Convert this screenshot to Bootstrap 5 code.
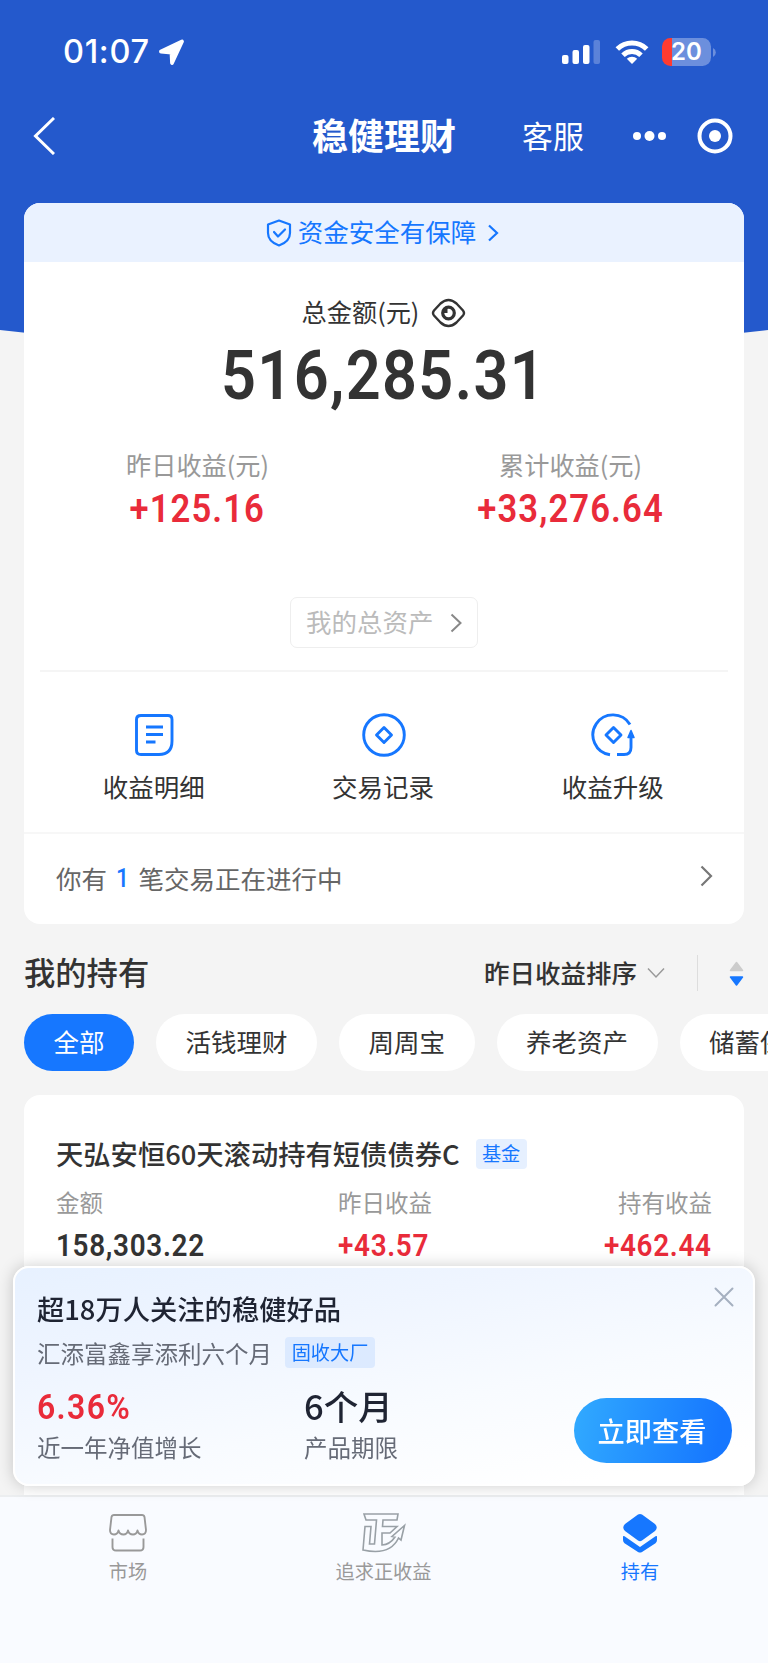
<!DOCTYPE html>
<html lang="zh-CN">
<head>
<meta charset="utf-8">
<meta name="viewport" content="width=device-width, initial-scale=1">
<title>稳健理财</title>
<link href="https://cdn.jsdelivr.net/npm/bootstrap@5.3.0/dist/css/bootstrap.min.css" rel="stylesheet">
<style>
  :root { --brand: #1677ff; --rise: #e92b3a; --ink: #333; }
  html, body { height: 1663px; overflow: hidden; }
  body { background: #f4f4f4; color: var(--ink); font-family: "Noto Sans CJK SC", sans-serif; font-size: 25.5px; line-height: 36px; }
  svg { display: block; flex: none; }
  .num { font-family: Roboto, "Noto Sans CJK SC", sans-serif; font-weight: 600; }
  .num > span { display: inline-block; transform: scaleX(.9); transform-origin: left; }
  .num.mid > span { transform-origin: center; }
  .num.end > span { transform-origin: right; }
  .rise { color: var(--rise); }
  .brand { color: var(--brand); }
  .muted { color: #999; }
  .nowrap { white-space: nowrap; }
  .lift { padding-bottom: 3px; }

  .hero { height: 372px; background: #2459cc; color: #fff; clip-path: polygon(0 0, 100% 0, 100% 330px, 50% 100%, 0 330px); }
  .status { height: 102px; padding: 2px 57px 0 63px; }
  .clock { font: 500 32.5px/40px Inter, sans-serif; letter-spacing: .7px; }
  .batt { width: 49px; height: 28px; border-radius: 8.5px; background: linear-gradient(90deg, #ff3b30 10px, #6c8fdd 10px); font: 600 24px/28px Inter, sans-serif; text-align: center; }
  .navrow { height: 68px; padding: 0 35px 0 32px; }
  .page-title { font-size: 36px; font-weight: 700; margin-left: 257px; width: 144px; }
  .service { font-size: 31px; margin-left: 66px; width: 62px; }

  .sheet { margin: 0 24px; border-radius: 16px; background: #fff; overflow: hidden; }
  .summary { margin-top: -169px; height: 721px; position: relative; }
  .safe { height: 59px; background: #eaf2ff; padding-right: 3px; }
  .total { font-size: 68px; line-height: 70px; letter-spacing: 1.5px; color: #333; }
  .gain { font-size: 38.5px; line-height: 44px; letter-spacing: 1.2px; }
  .assets { width: 188px; height: 51px; border: 1.5px solid #eee; border-radius: 7px; color: #bbb; }
  .actions { margin: 0 16px; height: 162px; border-top: 2px solid #f5f5f5; }
  .pending { height: 90px; padding: 0 31px 0 32px; border-top: 2px solid #f7f7f7; color: #666; }

  .holdhead { height: 60px; padding: 0 24px; margin-top: 19px; }
  .holdhead h2 { font-size: 31.3px; font-weight: 500; line-height: 40px; margin: 0; }
  .vr1 { width: 1px; height: 36px; background: #ddd; }
  .chips { gap: 22px; padding: 11px 0 0 24px; overflow: hidden; }
  .chip { height: 57px; padding: 0 29.5px 4px; border-radius: 29px; background: #fff; flex: none; display: flex; align-items: center; }
  .chip.on { background: var(--brand); color: #fff; }
  .fund { margin-top: 23.5px; height: 500px; padding: 38px 32px 0; }
  .fund-title { font-size: 27.3px; font-weight: 500; line-height: 40px; }
  .tagx { font-size: 19.2px; border-radius: 4px; background: #e6f0ff; color: var(--brand); display: flex; align-items: center; justify-content: center; padding-bottom: 1px; }
  .lab { font-size: 23.5px; line-height: 34px; }
  .val { font-size: 31px; line-height: 40px; letter-spacing: .75px; }

  .promo { margin: 0 13px 9px; height: 220px; border: 2px solid #fff; border-radius: 16px; padding: 20px 21px 0 22px; color: #1f2433;
    background: linear-gradient(168deg, #e7f1ff 0%, #eff5ff 30%, #f8fbff 60%, #fff 90%); box-shadow: 0 0 16px rgba(0,0,0,.2); position: relative; }
  .promo-title { font-size: 27.3px; font-weight: 500; line-height: 40px; }
  .promo .lab { color: #666b77; }
  .closer { position: absolute; right: 19px; top: 19px; }
  .cta { width: 158px; height: 65px; border-radius: 33px; background: linear-gradient(100deg, #31aaff, #1677ff 90%); color: #fff; font-size: 27.2px; font-weight: 500; margin-top: 17px; border: 0; padding: 0 2px 1px 0; }
  .tabs { height: 168px; background: #f9fbff; border-top: 2px solid #eceef0; padding-top: 16px; }
  .tabs .tab { width: 256px; font-size: 19.2px; line-height: 28px; color: #999; }
</style>
</head>
<body>
<header class="hero">
  <div class="status d-flex align-items-center">
    <span class="clock">01:07</span>
    <svg class="ms-2" width="28" height="27" viewBox="0 0 28 27"><path d="M3 12.500 24 2.500 14 24 13.500 13.500Z" fill="#fff" stroke="#fff" stroke-width="3.800" stroke-linejoin="round"/></svg>
    <svg class="ms-auto" width="39" height="25" viewBox="0 0 39 25" fill="#fff"><rect y="15" width="6.500" height="9" rx="2"/><rect x="10.500" y="10" width="6.500" height="14" rx="2"/><rect x="21" y="5" width="6.500" height="19" rx="2"/><rect x="31.500" width="6.500" height="24" rx="2" opacity=".25"/></svg>
    <svg style="margin-left:14px" width="34" height="26" viewBox="0 0 34 26" fill="none" stroke="#fff" stroke-width="5"><path d="M2.300 10a21 21 0 0 1 29.400 0"/><path d="M8 16.200a13 13 0 0 1 18 0"/><path d="M11.800 19.800a7.500 7.500 0 0 1 10.400 0L17 25Z" fill="#fff" stroke="none"/></svg>
    <div class="batt" style="margin-left:13px">20</div>
    <svg style="margin-left:2px; margin-right:-6px" width="4" height="9" viewBox="0 0 4 9"><path d="M0 0a5 5 0 0 1 0 9Z" fill="#6c8fdd"/></svg>
  </div>
  <nav class="navrow d-flex align-items-center nowrap">
    <svg width="23" height="38" viewBox="0 0 23 38" fill="none" stroke="#fff" stroke-width="3"><path d="M22 1 3.500 19 22 37"/></svg>
    <h1 class="page-title mb-0 lift">稳健理财</h1>
    <span class="service lift">客服</span>
    <svg class="ms-auto" width="34" height="12" viewBox="0 0 34 12" fill="#fff"><circle cx="4" cy="6" r="4"/><circle cx="16.500" cy="6" r="5"/><circle cx="29" cy="6" r="4"/></svg>
    <svg style="margin-left:30px" width="36" height="36" viewBox="0 0 36 36"><circle cx="18" cy="18" r="15.500" fill="none" stroke="#fff" stroke-width="4"/><circle cx="18" cy="18" r="6" fill="#fff"/></svg>
  </nav>
</header>

<main>
  <section class="sheet summary">
    <div class="safe brand d-flex align-items-center justify-content-center">
      <svg width="26" height="28" viewBox="0 0 26 28" fill="none" stroke="currentColor" stroke-width="2.200" stroke-linejoin="round"><path d="M13 1.500 24 5.500V14c0 6-4 10-11 12.500C6 24 2 20 2 14V5.500Z"/><path d="m8 13 4 4.500L19 10.500" stroke-linecap="round"/></svg>
      <span class="lift" style="margin-left:6px">资金安全有保障</span>
      <svg style="margin-left:11px" width="12" height="18" viewBox="0 0 12 18" fill="none" stroke="currentColor" stroke-width="2.200"><path d="m2 1.500 8 7.500-8 7.500"/></svg>
    </div>
    <div class="d-flex align-items-center justify-content-center" style="margin-top:31px">
      <span style="font-size:25.200px; padding-bottom:4px">总金额(元)</span>
      <svg style="margin-left:12px" width="35" height="30" viewBox="0 0 35 30" fill="none" stroke="#333" stroke-width="2.400"><path d="M3 12.500 9.500 5.500Q17.500-1.500 25.500 5.500L32 12.500Q34 15 32 17.500L25.500 24.500Q17.500 31.500 9.500 24.500L3 17.500Q1 15 3 12.500Z"/><circle cx="17.500" cy="15" r="5.800" stroke-width="3.200"/><path d="M16.500 10v5H12.500V10Z" fill="#333" stroke="none"/></svg>
    </div>
    <div class="total num mid text-center" style="margin-top:8px"><span>516,285.31</span></div>
    <div class="row g-0 text-center" style="margin-top:35px">
      <div class="col" style="flex:0 0 347px"><div class="muted" style="font-size:25.200px">昨日收益(元)</div><div class="gain num mid rise" style="margin-top:5px"><span>+125.16</span></div></div>
      <div class="col" style="padding-left:26px"><div class="muted" style="font-size:25.200px">累计收益(元)</div><div class="gain num mid rise" style="margin-top:5px"><span>+33,276.64</span></div></div>
    </div>
    <div class="assets d-flex align-items-center mx-auto" style="margin-top:66px; padding-left:15px">
      <span class="lift">我的总资产</span>
      <svg style="margin-left:16px" width="13" height="20" viewBox="0 0 13 20" fill="none" stroke="#888" stroke-width="2"><path d="m1.500 1.500 9 8.500-9 8.500"/></svg>
    </div>
    <div class="actions d-flex text-center" style="margin-top:22px; padding-top:40px">
      <div class="col-4 d-flex flex-column align-items-center">
        <svg width="46" height="46" viewBox="0 0 46 46" fill="none" stroke="#1677ff" stroke-width="2.900"><path d="M9 3.500H36Q40 3.500 40 7.500V29Q40 42.500 27 42.500H9Q4.500 42.500 4.500 38.500V7.500Q4.500 3.500 9 3.500Z"/><path d="M14 15h17M14 22.500h17M14 30H23.500"/></svg>
        <span style="margin:10px 2px 0 0">收益明细</span>
      </div>
      <div class="col-4 d-flex flex-column align-items-center">
        <svg width="46" height="46" viewBox="0 0 46 46" fill="none" stroke="#1677ff" stroke-width="2.900" stroke-linejoin="round"><circle cx="23" cy="23" r="20.300"/><path d="M23 15.500 30.500 23 23 30.500 15.500 23Z"/></svg>
        <span style="margin:10px 2px 0 0">交易记录</span>
      </div>
      <div class="col-4 d-flex flex-column align-items-center">
        <svg width="46" height="46" viewBox="0 0 46 46" fill="none" stroke="#1677ff" stroke-width="2.900" stroke-linejoin="round"><path d="M20 42.700A20 20 0 1 1 40 12.500"/><path d="M23.500 15.500 31 23 23.500 30.500 16 23Z"/><path d="M27 42.500h7q7 0 7-7V24"/><path d="M41 18.500 44 25.500h-6Z" fill="#1677ff" stroke-width="1.500"/></svg>
        <span style="margin:10px 1px 0 0">收益升级</span>
      </div>
    </div>
    <div class="pending d-flex align-items-center">
      <span>你有</span><span class="brand num" style="margin:0 8px 0 9px; font-weight:500"><span>1</span></span><span>笔交易正在进行中</span>
      <svg class="ms-auto mb-1" width="13" height="22" viewBox="0 0 13 22" fill="none" stroke="#777" stroke-width="2.200"><path d="m1.500 1.500 9.500 9.500-9.500 9.500"/></svg>
    </div>
  </section>

  <div class="holdhead d-flex align-items-center nowrap">
    <h2 class="lift">我的持有</h2>
    <span class="ms-auto lift" style="font-weight:500">昨日收益排序</span>
    <svg style="margin-left:10px" width="18" height="12" viewBox="0 0 18 12" fill="none" stroke="#999" stroke-width="1.500"><path d="m1 1.500 8 8.500 8-8.500"/></svg>
    <div class="vr1" style="margin:0 31px 0 32px"></div>
    <svg style="margin-top:2px" width="15" height="26" viewBox="0 0 15 26" stroke-width="1.500" stroke-linejoin="round"><path d="M7.500 1.500 13.500 9.500h-12Z" fill="#ccc" stroke="#ccc"/><path d="M7.500 24 13.500 16h-12Z" fill="#1677ff" stroke="#1677ff"/></svg>
  </div>

  <div class="chips d-flex nowrap">
    <span class="chip on">全部</span>
    <span class="chip">活钱理财</span>
    <span class="chip">周周宝</span>
    <span class="chip">养老资产</span>
    <span class="chip">储蓄保险</span>
  </div>

  <section class="sheet fund">
    <div class="d-flex align-items-center">
      <span class="fund-title">天弘安恒60天滚动持有短债债券C</span>
      <span class="tagx" style="width:51px; height:30px; margin:2px 0 0 16px">基金</span>
    </div>
    <div class="d-flex" style="margin-top:12px">
      <div style="width:282px"><div class="lab muted">金额</div><div class="val num" style="margin-top:7px"><span>158,303.22</span></div></div>
      <div><div class="lab muted">昨日收益</div><div class="val num rise" style="margin-top:7px"><span>+43.57</span></div></div>
      <div class="ms-auto text-end"><div class="lab muted">持有收益</div><div class="val num end rise" style="margin-top:7px"><span>+462.44</span></div></div>
    </div>
  </section>
</main>

<footer class="fixed-bottom nowrap">
  <aside class="promo">
    <svg class="closer" width="20" height="20" viewBox="0 0 20 20" stroke="#a5b0c0" stroke-width="2" stroke-linecap="round"><path d="M1.500 1.500 18.500 18.500M18.500 1.500 1.500 18.500"/></svg>
    <div class="promo-title">超18万人关注的稳健好品</div>
    <div class="d-flex align-items-center" style="margin-top:8px">
      <span class="lab">汇添富鑫享添利六个月</span>
      <span class="tagx" style="width:90px; height:31px; margin:0 0 1px 13px; background:#dceaff">固收大厂</span>
    </div>
    <div class="d-flex" style="margin-top:12px">
      <div style="width:267px"><div class="num rise" style="font-size:35.500px; line-height:46px; padding-top:2px; letter-spacing:1.500px"><span>6.36%</span></div><div class="lab" style="margin-top:0">近一年净值增长</div></div>
      <div><div style="font-size:34.500px; font-weight:500; line-height:46px">6个月</div><div class="lab" style="margin-top:2px">产品期限</div></div>
      <button class="cta ms-auto" style="margin-top:16px">立即查看</button>
    </div>
  </aside>
  <nav class="tabs d-flex text-center">
    <div class="tab d-flex flex-column align-items-center">
      <svg width="40" height="40" viewBox="0 0 40 40" fill="none" stroke="#999" stroke-width="1.900" stroke-linejoin="round"><path d="M6 2H34Q36 2 36.500 4L38 17Q38 21.500 34 21.500 30.500 21.500 29.500 17.500 28.500 21.500 25 21.500 21 21.500 20 17.500 19 21.500 15.500 21.500 11.500 21.500 10.500 17.500 9.500 21.500 6 21.500 2 21.500 2 17L3.500 4Q4 2 6 2Z"/><path d="M4.500 25.500V34Q4.500 37.500 8 37.500H32Q35.500 37.500 35.500 34V25.500"/></svg>
      <span style="margin-top:4px">市场</span>
    </div>
    <div class="tab d-flex flex-column align-items-center">
      <svg width="46" height="40" viewBox="0 0 46 40" fill="none" stroke="#99a0a6" stroke-width="1.600"><path d="M3 1H37L36 7H22L21.500 13.500H36L29 20H21V32Q29 31.500 34 24L31 23.500 43.500 12.500 40 27 37.500 25Q29 43 2 37L4 13.500H10L8.500 31H13.500L15.500 7H5Z"/></svg>
      <span style="margin:4px 1px 0 0">追求正收益</span>
    </div>
    <div class="tab brand d-flex flex-column align-items-center" style="color:#1677ff">
      <svg width="36" height="40" viewBox="0 0 36 40" fill="#1677ff"><path d="M16 1.500Q18 .500 20 1.500L33 11Q36.500 14.500 33 18L20 27.500Q18 29 16 27.500L3 18Q-.500 14.500 3 11Z"/><path d="M1 23.500Q1 22.500 2.500 23.200L18 34 33.500 23.200Q35 22.500 35 23.500V27Q35 29 33.500 30.200L20 39Q18 40.200 16 39L2.500 30.200Q1 29 1 27Z"/></svg>
      <span style="margin-top:4px">持有</span>
    </div>
  </nav>
</footer>
<script src="https://cdn.jsdelivr.net/npm/bootstrap@5.3.0/dist/js/bootstrap.bundle.min.js"></script>
</body>
</html>
